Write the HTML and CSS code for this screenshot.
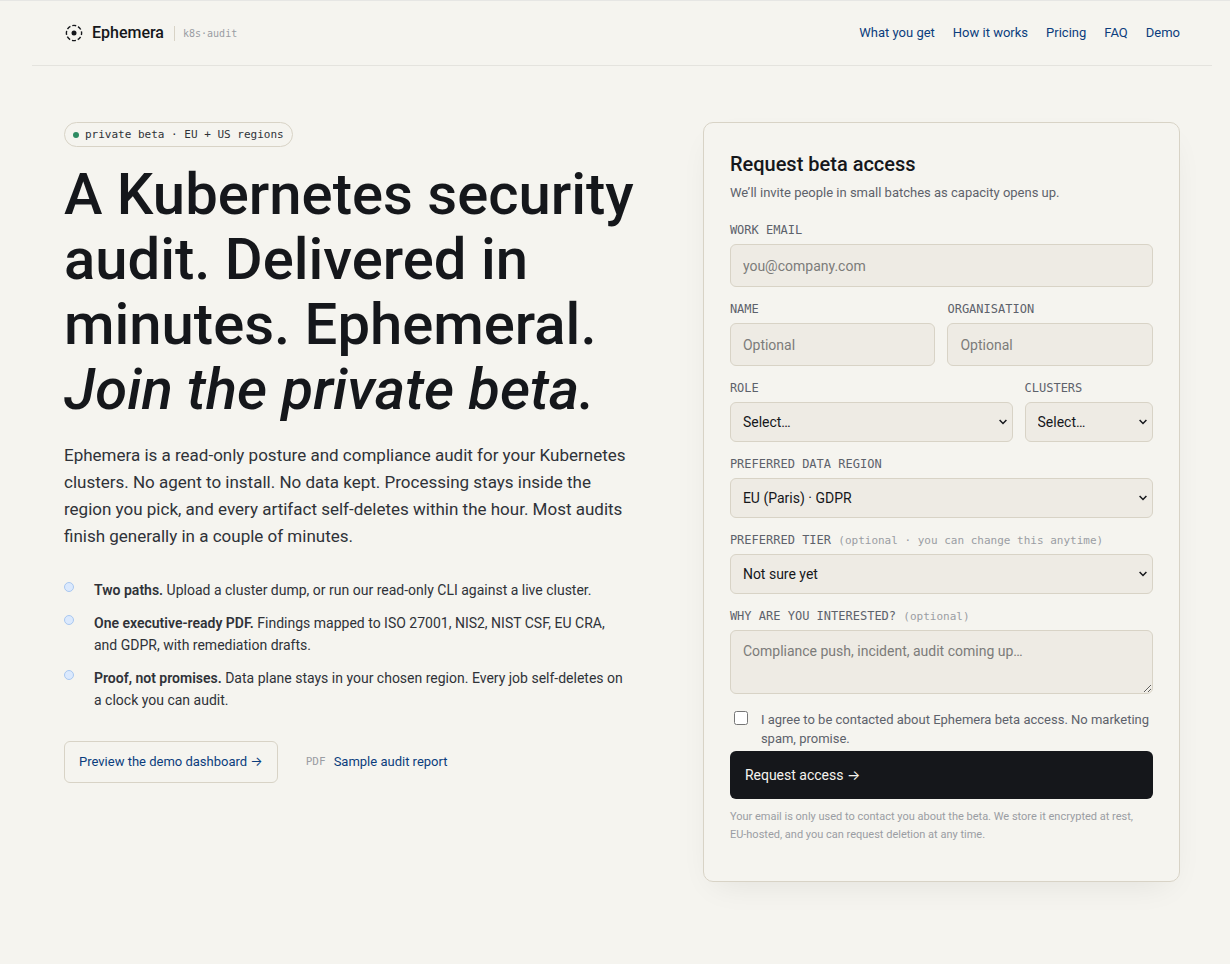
FILE: index.html
```html
<!DOCTYPE html>
<html lang="en">
<head>
<meta charset="utf-8">
<meta name="viewport" content="width=device-width, initial-scale=1">
<title>Ephemera</title>
<link rel="stylesheet" href="styles.css">
</head>
<body>
<div class="page">
  <header class="topbar">
    <div class="brand">
      <svg class="brand-mark" viewBox="0 0 20 20" aria-hidden="true">
        <circle cx="10" cy="10" r="7.6" fill="none" stroke="currentColor" stroke-width="1.4" stroke-dasharray="4 1.97" stroke-dashoffset="2"/>
        <circle cx="10" cy="10" r="2.5" fill="currentColor"/>
      </svg>
      <span class="brand-name">Ephemera</span>
      <span class="brand-tag">k8s·audit</span>
    </div>
    <nav class="nav">
      <a href="#get">What you get</a>
      <a href="#how">How it works</a>
      <a href="#pricing">Pricing</a>
      <a href="#faq">FAQ</a>
      <a href="#demo">Demo</a>
    </nav>
  </header>

  <main class="hero">
    <section class="intro">
      <div class="pill"><span class="pill-dot"></span>private beta · EU + US regions</div>
      <h1 class="headline">A Kubernetes security audit. Delivered in minutes. Ephemeral. <em class="headline-em">Join the private beta.</em></h1>
      <p class="lead">Ephemera is a read-only posture and compliance audit for your Kubernetes clusters. No agent to install. No data kept. Processing stays inside the region you pick, and every artifact self-deletes within the hour. Most audits finish generally in a couple of minutes.</p>
      <ul class="points">
        <li class="point"><span class="point-dot"></span><span><strong>Two paths.</strong> Upload a cluster dump, or run our read-only CLI against a live cluster.</span></li>
        <li class="point"><span class="point-dot"></span><span><strong>One executive-ready PDF.</strong> Findings mapped to ISO 27001, NIS2, NIST CSF, EU CRA, and GDPR, with remediation drafts.</span></li>
        <li class="point"><span class="point-dot"></span><span><strong>Proof, not promises.</strong> Data plane stays in your chosen region. Every job self-deletes on a clock you can audit.</span></li>
      </ul>
      <div class="actions">
        <a class="demo-link" href="#demo">Preview the demo dashboard →</a>
        <a class="pdf-link" href="#report"><span class="pdf-tag">PDF</span>Sample audit report</a>
      </div>
    </section>

    <form class="card" id="access">
      <h2 class="card-title">Request beta access</h2>
      <p class="card-sub">We’ll invite people in small batches as capacity opens up.</p>
      <div class="field">
        <label class="label" for="email">WORK EMAIL</label>
        <input class="control" id="email" type="email" placeholder="you@company.com">
      </div>
      <div class="row row-even">
        <div class="field">
          <label class="label" for="name">NAME</label>
          <input class="control" id="name" type="text" placeholder="Optional">
        </div>
        <div class="field">
          <label class="label" for="org">ORGANISATION</label>
          <input class="control" id="org" type="text" placeholder="Optional">
        </div>
      </div>
      <div class="row row-wide">
        <div class="field">
          <label class="label" for="role">ROLE</label>
          <select class="control select" id="role"><option>Select…</option></select>
        </div>
        <div class="field">
          <label class="label" for="clusters">CLUSTERS</label>
          <select class="control select" id="clusters"><option>Select…</option></select>
        </div>
      </div>
      <div class="field">
        <label class="label" for="region">PREFERRED DATA REGION</label>
        <select class="control select" id="region"><option>EU (Paris) · GDPR</option></select>
      </div>
      <div class="field">
        <label class="label" for="tier">PREFERRED TIER <span class="hint">(optional · you can change this anytime)</span></label>
        <select class="control select" id="tier"><option>Not sure yet</option></select>
      </div>
      <div class="field">
        <label class="label" for="why">WHY ARE YOU INTERESTED? <span class="hint">(optional)</span></label>
        <textarea class="control area" id="why" placeholder="Compliance push, incident, audit coming up…"></textarea>
      </div>
      <div class="consent">
        <input class="check" id="agree" type="checkbox">
        <label for="agree">I agree to be contacted about Ephemera beta access. No marketing spam, promise.</label>
      </div>
      <button class="submit" type="submit">Request access →</button>
      <p class="fine">Your email is only used to contact you about the beta. We store it encrypted at rest, EU-hosted, and you can request deletion at any time.</p>
    </form>
  </main>
</div>
</body>
</html>
```
FILE: styles.css
```css
:root {
  --bg: #f5f4ef;
  --ink: #15171b;
  --ink-2: #2f3238;
  --muted: #5d626b;
  --faint: #9a9da3;
  --line: #d8d3c6;
  --hair: #e4e3de;
  --link: #0b3d7d;
  --field: #eeebe4;
  --sans: Roboto, Inter, "Liberation Sans", sans-serif;
  --mono: "DejaVu Sans Mono", "Liberation Mono", monospace;
}
*, *::before, *::after { box-sizing: border-box; }
body {
  margin: 0;
  min-height: 100vh;
  border-top: 1px solid #e6e6e4;
  background: var(--bg);
  color: var(--ink);
  font: 14px/20px var(--sans);
}
a { color: var(--link); text-decoration: none; }
h1, h2, p, ul { margin: 0; padding: 0; }

.page { max-width: 1180px; margin: 0 18px 0 32px; }

.topbar {
  display: flex;
  align-items: center;
  justify-content: space-between;
  padding: 20px 32px;
  border-bottom: 1px solid var(--hair);
}
.brand { display: flex; align-items: center; height: 24px; }
.brand-mark { width: 20px; height: 20px; margin-right: 8px; }
.brand-name { font-size: 16px; font-weight: 500; }
.brand-tag {
  margin-left: 10px;
  padding-left: 8px;
  border-left: 1px solid var(--line);
  color: var(--faint);
  font: 10px/15px var(--mono);
}
.nav { display: flex; gap: 18px; font-size: 13px; }

.hero {
  display: grid;
  grid-template-columns: minmax(0, 1.205fr) minmax(0, 1fr);
  gap: 64px;
  align-items: start;
  padding: 56px 32px 64px;
}
.pill {
  display: inline-flex;
  align-items: center;
  gap: 6px;
  height: 25px;
  padding: 0 8px;
  border: 1px solid var(--line);
  border-radius: 13px;
  color: var(--ink-2);
  font: 11px/16px var(--mono);
  vertical-align: top;
}
.pill-dot { width: 6px; height: 6px; border-radius: 50%; background: #2e8b62; }
.headline {
  margin-top: 15px;
  font-size: 58px;
  line-height: 65px;
  font-weight: 500;
}
.headline-em { display: block; }
.lead { margin-top: 20px; color: var(--ink-2); font-size: 17px; line-height: 27px; }
.points {
  display: grid;
  gap: 11px;
  margin-top: 29px;
  padding-right: 10px;
  list-style: none;
  color: var(--ink-2);
  font-size: 14px;
  line-height: 22px;
}
.point { display: flex; gap: 20px; }
.point strong { font-weight: 600; }
.point-dot {
  flex: none;
  width: 10px;
  height: 10px;
  margin-top: 3px;
  border: 1px solid #a9c8f0;
  border-radius: 50%;
  background: #dbe9fd;
}
.actions { display: flex; align-items: center; gap: 28px; margin-top: 30px; font-size: 13px; }
.demo-link { padding: 10px 14px; border: 1px solid var(--line); border-radius: 6px; }
.pdf-link { display: flex; align-items: center; gap: 8px; }
.pdf-tag { color: var(--faint); font: 11px/16px var(--mono); }

.card {
  padding: 30px 26px 37px;
  border: 1px solid var(--line);
  border-radius: 10px;
  box-shadow: 0 12px 32px -12px rgba(20, 22, 26, 0.09);
}
.card-title { font-size: 20px; line-height: 22px; font-weight: 500; }
.card-sub { margin: 8px 0 19px; color: var(--muted); font-size: 13px; line-height: 20px; }
.field { display: flex; flex-direction: column; gap: 6px; margin-bottom: 14px; min-width: 0; }
.label { color: var(--muted); font: 12px/16px var(--mono); }
.hint { color: var(--faint); font-size: 11px; line-height: 1; }
.row { display: grid; gap: 12px; }
.row-even { grid-template-columns: 1fr 1fr; }
.row-wide { grid-template-columns: 2.2fr 1fr; }
.control {
  width: 100%;
  height: 43px;
  margin: 0;
  padding: 0 12px;
  border: 1px solid var(--line);
  border-radius: 6px;
  background-color: var(--field);
  color: var(--ink);
  font: 14px/21px var(--sans);
}
.control::placeholder { color: #7c7c7a; }
.select {
  height: 40px;
  appearance: none;
  background-image: url("data:image/svg+xml,%3Csvg xmlns='http://www.w3.org/2000/svg' width='8' height='6' viewBox='0 0 8 6'%3E%3Cpath d='M.6 1 4 4.5 7.4 1' fill='none' stroke='%2315171b' stroke-width='1.5'/%3E%3C/svg%3E");
  background-repeat: no-repeat;
  background-position: right 5px center;
}
.area { display: block; height: 64px; padding: 10px 12px; resize: vertical; }
.consent {
  display: flex;
  align-items: flex-start;
  gap: 13px;
  margin-top: 16px;
  padding-left: 4px;
  color: var(--muted);
  font-size: 13px;
  line-height: 19px;
}
.check { flex: none; width: 14px; height: 14px; margin: 1px 0 0; }
.submit {
  width: 100%;
  height: 48px;
  margin-top: 3px;
  padding: 0 15px;
  border: 0;
  border-radius: 6px;
  background: var(--ink);
  color: var(--bg);
  font: 14px/20px var(--sans);
  text-align: left;
}
.fine { margin-top: 9px; padding-right: 16px; color: var(--faint); font-size: 11px; line-height: 18px; }

@media (max-width: 860px) {
  .hero { grid-template-columns: 1fr; gap: 40px; }
  .topbar { flex-wrap: wrap; gap: 12px; }
  .headline { font-size: 42px; line-height: 48px; }
}
```
